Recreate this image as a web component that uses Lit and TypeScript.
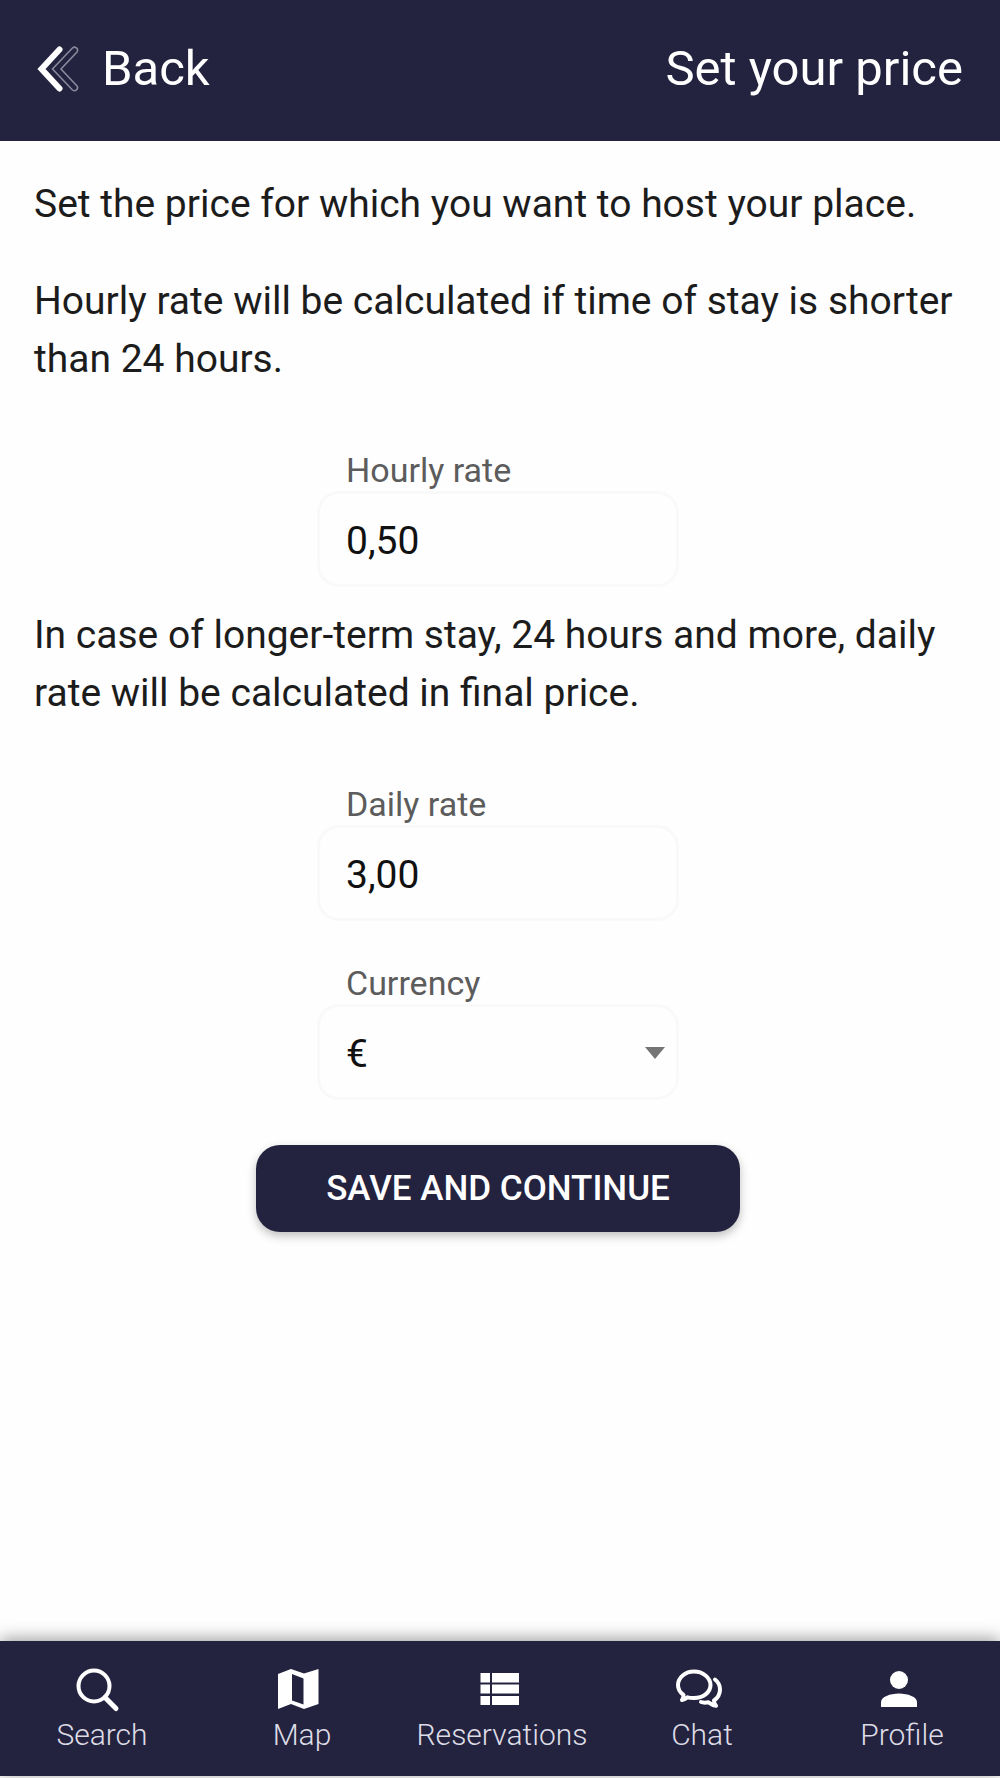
import { LitElement, html, css, svg } from "lit";
import { customElement, state } from "lit/decorators.js";

const icons = {
  search: svg`<circle cx="18" cy="18" r="15.5" fill="none" stroke="currentColor" stroke-width="4"/><path d="M29 29.5 40 40.5" fill="none" stroke="currentColor" stroke-width="5" stroke-linecap="round"/>`,
  map: svg`<path fill-rule="evenodd" fill="currentColor" d="M2 6 15 1 28 5.500 42.500 1V36L28 41 15 36 2 41ZM16 6V32.500L27.500 36.500V10.500Z"/>`,
  list: svg`<path fill="currentColor" d="M4.500 5h9.500v9.500H4.500zM16 5H43v9.500H16zM4.500 16.500h9.500v9H4.500zM16 16.500H43v9H16zM4.500 28h9.500v9H4.500zM16 28H43v9H16z"/>`,
  chat: svg`<g fill="none" stroke="currentColor" stroke-width="4" stroke-linejoin="round"><path d="M7.500 27C4 24.500 2 21 2 17 2 9.500 9.300 3.500 18 3.500S34.500 9.500 34.500 17 27 30 18 30C15.500 30 13.400 29.900 11.500 29.300 10 30.600 8.500 31.400 6 32 7.200 30.500 7.600 28.800 7.500 27Z"/><path d="M39 11.500C42.300 14 44 17.500 44 21.500 44 26 41.800 29.800 38 32.500 38 34.300 38.600 36 40 37.800 37 37.300 34.800 36 32.500 34.300 29.500 34.800 26.800 34.700 25 34" stroke-linecap="round"/></g>`,
  profile: svg`<circle cx="23" cy="12" r="9" fill="currentColor"/><path fill="currentColor" d="M5 39V34C5 29 14 25.500 23 25.500S41 29 41 34V39Z"/>`,
};

const tabs = [
  { label: "Search", icon: icons.search },
  { label: "Map", icon: icons.map },
  { label: "Reservations", icon: icons.list },
  { label: "Chat", icon: icons.chat },
  { label: "Profile", icon: icons.profile },
];

@customElement("app-root")
export class AppRoot extends LitElement {
  static styles = css`
    :host {
      display: flex;
      flex-direction: column;
      box-sizing: border-box;
      min-height: 100vh;
      padding-bottom: 2px;
      background: #fefefe;
      color: #1c1c1c;
      font-family: Roboto, "Liberation Sans", sans-serif;
    }
    * { box-sizing: border-box; }
    .bar {
      display: flex;
      align-items: center;
      justify-content: space-between;
      height: 141px;
      padding: 0 37px 4px;
      background: #24233f;
      color: #fff;
    }
    .back {
      display: flex;
      align-items: center;
      gap: 21px;
      color: inherit;
      text-decoration: none;
      font-size: 49px;
      line-height: 56px;
    }
    .back svg { width: 44px; height: 46px; }
    .title {
      margin: 0;
      font-size: 49px;
      font-weight: 400;
      line-height: 56px;
    }
    main {
      flex: 1;
      display: flex;
      flex-direction: column;
      padding: 34px 38px 40px 34px;
    }
    p {
      margin: 0;
      font-size: 39px;
      line-height: 58px;
    }
    p + p { margin-top: 39px; }
    form { display: flex; flex-direction: column; }
    .field {
      align-self: center;
      position: relative;
      width: 362px;
      margin: 61px 0 19px;
    }
    .field + .field { margin-top: 22px; }
    label {
      display: block;
      padding-left: 29px;
      color: #5c5c5c;
      font-size: 34px;
      line-height: 42px;
    }
    .control {
      display: block;
      appearance: none;
      width: 100%;
      height: 96px;
      margin: 0;
      padding: 4px 26px 0;
      border: 3px solid #f9f9f9;
      border-radius: 22px;
      background: #fefefe;
      color: #111;
      font-family: inherit;
      font-size: 39px;
      outline: none;
    }
    .arrow {
      position: absolute;
      right: 14px;
      bottom: 41px;
      width: 20px;
      height: 12px;
      fill: #757575;
      pointer-events: none;
    }
    .save {
      align-self: center;
      width: 484px;
      height: 87px;
      margin-top: 26px;
      border: 0;
      border-radius: 24px;
      background: #24233f;
      box-shadow: 0 4px 10px rgba(0, 0, 0, 0.25);
      color: #fff;
      font-family: inherit;
      font-size: 35px;
      font-weight: 500;
      text-transform: uppercase;
    }
    nav {
      display: grid;
      grid-template-columns: repeat(5, 1fr);
      height: 135px;
      background: #24233f;
      box-shadow: 0 -2px 16px rgba(0, 0, 0, 0.4);
    }
    .tab {
      display: flex;
      flex-direction: column;
      align-items: center;
      gap: 7px;
      padding-top: 27px;
      color: #fff;
      text-decoration: none;
    }
    .tab svg {
      width: 44px;
      height: 42px;
      margin-right: 4px;
      overflow: visible;
    }
    .tab span {
      padding-left: 4px;
      color: #dddce6;
      font-size: 30px;
      font-weight: 300;
      line-height: 36px;
    }
  `;

  @state() private hourly = "0,50";
  @state() private daily = "3,00";

  render() {
    return html`
      <header class="bar">
        <a class="back" href="#">
          <svg viewBox="0 0 44 46" aria-hidden="true">
            <path d="M22.500 3.500 4.500 23 22.500 42.500" fill="none" stroke="#fff" stroke-width="6" stroke-linecap="round" stroke-linejoin="miter"/>
            <path d="M35.500 2 15.500 23 35.500 44C38 46 42 43 40 40L24 23 40 6C42 3 38-.5 35.500 2Z" fill="none" stroke="#8a899c" stroke-width="1.600"/>
          </svg>
          <span>Back</span>
        </a>
        <h1 class="title">Set your price</h1>
      </header>
      <main>
        <p>Set the price for which you want to host your place.</p>
        <p>Hourly rate will be calculated if time of stay is shorter than 24 hours.</p>
        <form @submit=${(e: Event) => e.preventDefault()}>
          <div class="field">
            <label for="hourly">Hourly rate</label>
            <input class="control" id="hourly" inputmode="decimal" .value=${this.hourly}
              @input=${(e: Event) => (this.hourly = (e.target as HTMLInputElement).value)} />
          </div>
          <p>In case of longer-term stay, 24 hours and more, daily rate will be calculated in final price.</p>
          <div class="field">
            <label for="daily">Daily rate</label>
            <input class="control" id="daily" inputmode="decimal" .value=${this.daily}
              @input=${(e: Event) => (this.daily = (e.target as HTMLInputElement).value)} />
          </div>
          <div class="field">
            <label for="currency">Currency</label>
            <select class="control" id="currency"><option>€</option></select>
            <svg class="arrow" viewBox="0 0 20 12" aria-hidden="true"><path d="M0 0H20L10 12Z"/></svg>
          </div>
          <button class="save" type="submit">Save and continue</button>
        </form>
      </main>
      <nav>
        ${tabs.map(
          (t) => html`<a class="tab" href="#">
            <svg viewBox="0 0 44 42" aria-hidden="true">${t.icon}</svg>
            <span>${t.label}</span>
          </a>`
        )}
      </nav>
    `;
  }
}
